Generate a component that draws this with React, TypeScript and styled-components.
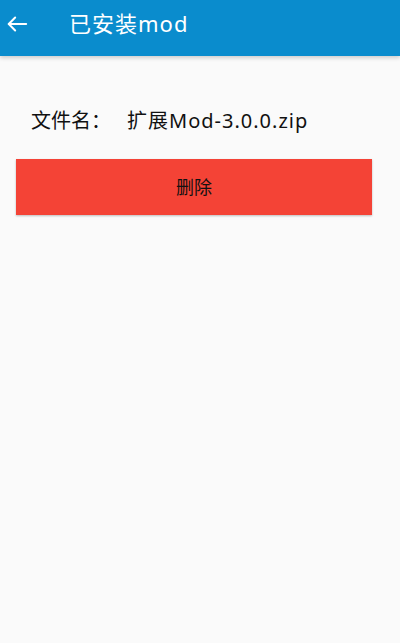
import React from "react";
import styled, { createGlobalStyle } from "styled-components";

const Global = createGlobalStyle`
  html, body { margin: 0; padding: 0; background: #fafafa; }
  body { font-family: "Noto Sans", "Noto Sans CJK SC", sans-serif; }
`;

const Page = styled.div`
  width: 400px;
  height: 643px;
  background: #fafafa;
  display: flex;
  flex-direction: column;
`;

const AppBar = styled.header`
  height: 56px;
  background: #0a8ccd;
  display: flex;
  align-items: center;
  box-shadow: 0 2px 4px rgba(0, 0, 0, 0.18);
  position: relative;
  z-index: 1;
`;

const BackButton = styled.button`
  width: 22px;
  height: 44px;
  margin-left: 6px;
  border: none;
  background: transparent;
  padding: 0;
  display: flex;
  align-items: center;
  justify-content: center;
  color: #fff;
  margin-top: -8px;
`;

const Title = styled.h1`
  margin: 0 0 0 41px;
  font-size: 22px;
  font-weight: 400;
  color: #fff;
  line-height: 1;
  letter-spacing: 1px;
  padding-bottom: 10px;
`;

const Content = styled.main`
  display: flex;
  flex-direction: column;
  padding: 49px 28px 0 16px;
`;

const FileRow = styled.div`
  display: flex;
  align-items: baseline;
  padding-left: 15px;
  height: 37px;
  color: #111;
`;

const Label = styled.span`
  font-size: 20px;
  width: 96px;
`;

const FileName = styled.span`
  font-size: 20px;
  letter-spacing: 1px;
`;

const DeleteButton = styled.button`
  margin-top: 17px;
  height: 56px;
  border: none;
  background: #f44336;
  color: #111;
  font-family: inherit;
  font-size: 18px;
  box-shadow: 0 1px 2px rgba(0, 0, 0, 0.25);
  display: flex;
  align-items: center;
  justify-content: center;
  padding: 0 0 3px 0;
`;

export default function App() {
  return (
    <Page>
      <Global />
      <AppBar>
        <BackButton aria-label="back">
          <svg width="22" height="22" viewBox="0 0 24 24" fill="none" stroke="#fff" strokeWidth="2.2" strokeLinecap="round" strokeLinejoin="round">
            <path d="M22 12H3" />
            <path d="M10 5l-7 7 7 7" />
          </svg>
        </BackButton>
        <Title>已安装mod</Title>
      </AppBar>
      <Content>
        <FileRow>
          <Label>文件名：</Label>
          <FileName>扩展Mod-3.0.0.zip</FileName>
        </FileRow>
        <DeleteButton>删除</DeleteButton>
      </Content>
    </Page>
  );
}
